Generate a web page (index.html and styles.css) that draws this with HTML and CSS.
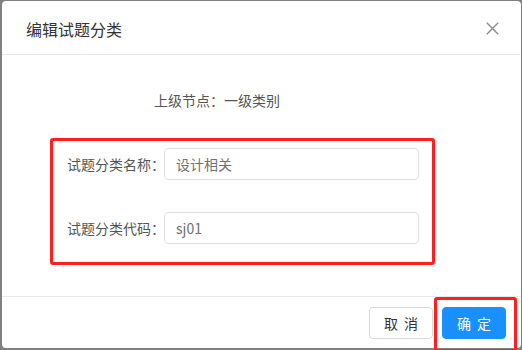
FILE: index.html
```html
<!DOCTYPE html>
<html lang="zh">
<head>
<meta charset="utf-8">
<title>编辑试题分类</title>
<link rel="stylesheet" href="styles.css">
</head>
<body>
<div class="dialog">
  <div class="dialog-header">
    <span class="dialog-title">编辑试题分类</span>
    <button class="close" aria-label="关闭">
      <svg width="13" height="13" viewBox="0 0 13 13"><path d="M0.8 0.8L12.2 12.2M12.2 0.8L0.8 12.2" stroke="#8c8c8c" stroke-width="1.4" fill="none"/></svg>
    </button>
  </div>
  <div class="dialog-body">
    <div class="parent-row">上级节点：一级类别</div>
    <div class="form-box">
      <div class="form-item">
        <label class="form-label">试题分类名称：</label>
        <div class="input">设计相关</div>
      </div>
      <div class="form-item">
        <label class="form-label">试题分类代码：</label>
        <div class="input">sj01</div>
      </div>
    </div>
  </div>
  <div class="dialog-footer">
    <button class="btn"><span class="btn-text">取 消</span></button>
    <button class="btn btn-primary"><span class="btn-text">确 定</span></button>
  </div>
</div>
<div class="mark-ok"></div>
</body>
</html>
```

FILE: styles.css
```css
html, body {
  margin: 0;
  padding: 0;
}
body {
  background: #808080;
  width: 522px;
  height: 350px;
  overflow: hidden;
  position: relative;
  font-family: "Noto Sans CJK SC", "Noto Sans", sans-serif;
  font-size: 14px;
  color: #606266;
}
.dialog {
  margin: 1px 1px 0 2px;
  width: 519px;
  height: 347px;
  background: #fff;
  border-radius: 4px;
  display: flex;
  flex-direction: column;
}
.dialog-header {
  border-bottom: 1px solid #e8e8e8;
  display: flex;
  align-items: center;
  justify-content: space-between;
  padding: 2px 22px 0 24px;
  box-sizing: border-box;
  height: 54px;
}
.dialog-title {
  font-size: 16px;
  line-height: 22px;
  color: #333;
}
.close {
  border: 0;
  background: none;
  padding: 0;
  width: 13px;
  height: 13px;
  display: flex;
}
.dialog-body {
  height: 241px;
  box-sizing: border-box;
  padding: 34px 0 0 48px;
}
.parent-row {
  line-height: 22px;
  padding-left: 104px;
  color: #555;
}
.form-box {
  margin-top: 27px;
  width: 385px;
  height: 127px;
  box-sizing: border-box;
  border: 3px solid #ff1f1f;
  border-radius: 3px;
  padding: 7px 0 0 14px;
  display: flex;
  flex-direction: column;
  gap: 32px;
}
.form-item {
  display: grid;
  grid-template-columns: 97px 255px;
  align-items: center;
}
.form-label {
  color: #555;
  white-space: nowrap;
  line-height: 22px;
}
.input {
  height: 32px;
  box-sizing: border-box;
  border: 1px solid #dcdfe6;
  border-radius: 4px;
  padding: 0 11px;
  line-height: 30px;
  color: #707070;
}
.dialog-footer {
  border-top: 1px solid #e8e8e8;
  flex: 1;
  display: flex;
  justify-content: flex-end;
  align-items: flex-start;
  gap: 9px;
  padding: 10px 15px 0 0;
}
.btn {
  width: 64px;
  height: 32px;
  border: 1px solid #d9d9d9;
  border-radius: 4px;
  background: #fff;
  color: #333;
  font-family: inherit;
  font-size: 14px;
  padding: 0;
}
.btn-text {
  word-spacing: 3px;
}
.btn-primary {
  background: #1890ff;
  border-color: #1890ff;
  color: #fff;
}
.mark-ok {
  position: absolute;
  left: 434px;
  top: 297px;
  width: 83px;
  height: 55px;
  box-sizing: border-box;
  border: 3px solid #ff1f1f;
  border-radius: 3px;
}
```
